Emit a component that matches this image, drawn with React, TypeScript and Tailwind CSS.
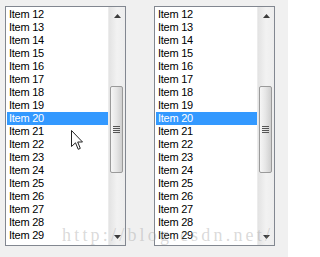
const items = Array.from({ length: 18 }, (_, i) => `Item ${i + 12}`)

const Arrow = ({ down }: { down?: boolean }) => (
  <div className="h-[17px] flex items-center justify-center">
    <svg width="7" height="4" viewBox="0 0 7 4" className={down ? "rotate-180" : ""}>
      <path d="M3.5 0 L7 4 L0 4 Z" fill="#3c3c3c" />
    </svg>
  </div>
)

const ScrollBar = () => (
  <div className="w-[17px] flex flex-col bg-gradient-to-r from-[#e3e3e3] via-[#f2f2f2] to-[#ededed] border-l border-[#ececec]">
    <Arrow />
    <div className="h-[62px]" />
    <div className="h-[87px] mx-px mr-[2px] rounded-[2px] border border-[#9a9a9a] bg-gradient-to-r from-[#f6f6f6] via-[#e6e6e6] to-[#cfcfcf] flex flex-col items-center justify-center gap-px">
      <div className="w-[7px] h-px bg-[#555]" />
      <div className="w-[7px] h-px bg-[#555]" />
      <div className="w-[7px] h-px bg-[#555]" />
      <div className="w-[7px] h-px bg-[#555]" />
    </div>
    <div className="flex-1" />
    <Arrow down />
  </div>
)

const ListBox = () => (
  <div className="w-[121px] h-[240px] border border-[#828790] bg-white flex">
    <div className="flex-1 pt-px pl-px overflow-hidden">
      {items.map((item) => {
        const selected = item === "Item 20"
        return (
          <div
            key={item}
            className={`h-[13px] leading-[13px] pl-[2px] text-[11px] tracking-[-0.25px] whitespace-nowrap ${
              selected ? "bg-[#3399ff] text-white" : "text-black"
            }`}
          >
            {item}
          </div>
        )
      })}
    </div>
    <ScrollBar />
  </div>
)

export default function App() {
  return (
    <div className="relative w-[288px] h-[257px] bg-[#f0f0f0] pl-[5px] pt-[6px] flex gap-[28px] font-['Liberation_Sans',Arial,sans-serif] overflow-hidden">
      <ListBox />
      <ListBox />
      <svg
        className="absolute left-[71px] top-[130px]"
        width="13"
        height="21"
        viewBox="0 0 13 21"
      >
        <path
          d="M0.5 0.5 L0.5 16.5 L4.5 12.8 L7.2 19.3 L9.3 18.4 L6.7 12 L11.5 12 Z"
          fill="white"
          stroke="#222"
          strokeWidth="1"
          strokeLinejoin="round"
        />
      </svg>
      <div className="absolute left-[62px] top-[226px] text-[18px] leading-[18px] tracking-[3.2px] font-['Liberation_Serif',serif] text-[#a0a0a0]/40 whitespace-nowrap pointer-events-none">
        http://blog.csdn.net/
      </div>
    </div>
  )
}
